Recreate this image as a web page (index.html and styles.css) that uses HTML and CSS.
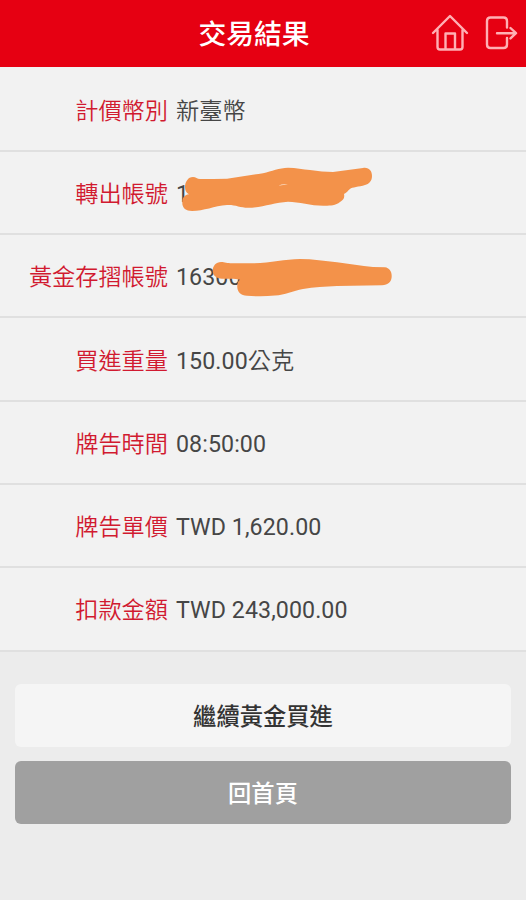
FILE: index.html
```html
<!DOCTYPE html>
<html lang="zh-Hant">
<head>
<meta charset="utf-8">
<meta name="viewport" content="width=device-width, initial-scale=1">
<title>交易結果</title>
<link rel="stylesheet" href="styles.css">
</head>
<body>
<header class="topbar">
  <h1 class="title">交易結果</h1>
  <nav class="actions">
    <svg class="icon" width="38" height="38" viewBox="0 0 38 38">
      <path d="M2 19 19 2 36 19 M6.500 16V33Q6.500 35.500 9 35.500H29Q31.500 35.500 31.500 33V16 M14.500 35V19.500H24V35"/>
    </svg>
    <svg class="icon" width="33" height="34" viewBox="0 0 33 34">
      <path d="M22 11.500V5Q22 1.500 18.500 1.500H5.500Q2 1.500 2 5V28.500Q2 32 5.500 32H18.500Q22 32 22 28.500V22 M12 17.200H30 M25.500 12 31 17.200 25.500 22.400"/>
    </svg>
  </nav>
</header>
<main>
  <dl class="details">
    <div class="row"><dt>計價幣別</dt><dd><span class="han">新臺幣</span></dd></div>
    <div class="row"><dt>轉出帳號</dt><dd>1
      <svg class="mask mask-out" width="200" height="46" viewBox="0 0 200 46">
        <path d="M17 10C20 10 21 12 24 12C33 12 42 12 51 11.700C63 10 75 8 87 6.300C96 4 103 1 112 .7C120 .7 127 2.500 134 3C142 4 150 5 157 5L187 1C193 0 196 4 196 9C196 14 193 17 189 18C183 20 176 20 174 22C172 23 172 25 168 27C169 31 167 33 164 35C159 39 153 38.700 147 38.700C135 38.700 123 34.700 112 34.700C98 35.500 86 40.700 72 40.700C64 40.700 59 37.500 51 38C38 39 28 44 16 44C10 44 6.300 41 6.300 36C6.300 31 8 28 13 27.300C10 26 9 23 9 20C9 15 12 10 17 10Z"/>
        <path class="gap" d="M102.500 18.700Q107 16.500 112 17.700Q107 17.800 102.500 18.700Z"/>
      </svg></dd></div>
    <div class="row"><dt>黃金存摺帳號</dt><dd>16300
      <svg class="mask mask-gold" width="220" height="40" viewBox="0 0 220 40">
        <path d="M45 4C49 4 51 5.300 56 5.300H78C95 5 109 1 124 1C137 1 149 3 161 4.300C173 6 185 8 197 9L209 9.300C213 10 215.700 13 215.700 18C215.700 24 212 27 206 27.300L161 28C149 28.500 138 29 127 31C117 33 109 37 99 37.500C90 38.500 80 38.500 71 37.700C65 37.700 61.500 34 61.300 29.300C61 26 62 23 64 21.700C58 20 52 21 46 20.700C40 20.700 36.700 17 36.700 12.700C36.700 8 40 4 45 4Z"/>
      </svg></dd></div>
    <div class="row"><dt>買進重量</dt><dd>150.00<span class="han">公克</span></dd></div>
    <div class="row"><dt>牌告時間</dt><dd>08:50:00</dd></div>
    <div class="row"><dt>牌告單價</dt><dd>TWD 1,620.00</dd></div>
    <div class="row"><dt>扣款金額</dt><dd>TWD 243,000.00</dd></div>
  </dl>
  <div class="buttons">
    <button class="btn btn-light" type="button">繼續黃金買進</button>
    <button class="btn btn-dark" type="button">回首頁</button>
  </div>
</main>
</body>
</html>
```
FILE: styles.css
```css
* {
  box-sizing: border-box;
}

body {
  margin: 0;
  min-height: 100vh;
  background: #ececec;
  font-family: Roboto, "Noto Sans CJK TC", sans-serif;
  color: #464646;
}

.topbar {
  display: grid;
  grid-template-columns: 1fr auto 1fr;
  align-items: center;
  height: 67px;
  padding: 0 8px 0 0;
  background: #e60012;
}

.title {
  grid-column: 2;
  margin: 3px 0 0 -10px;
  font-size: 27.8px;
  line-height: 40px;
  font-weight: 500;
  color: #fff;
}

.actions {
  display: flex;
  justify-content: flex-end;
  align-items: center;
  gap: 16px;
}

.icon {
  display: block;
  margin-top: -1px;
  fill: none;
  stroke: #ffb0b4;
  stroke-width: 2.4;
  stroke-linecap: round;
  stroke-linejoin: round;
}

.details {
  margin: 0;
  padding-top: 1.5px;
  background: #f2f2f2;
}

.row {
  display: flex;
  align-items: center;
  height: 83.3px;
  padding-top: 3px;
  border-bottom: 2px solid #e0e0e0;
  font-size: 23.2px;
  line-height: 34px;
}

.row dt {
  width: 168px;
  text-align: right;
  color: #d11a30;
  font-weight: 350;
}

.row dd {
  position: relative;
  margin: 0 0 0 8px;
  font-weight: 400;
  letter-spacing: 0.08px;
  white-space: nowrap;
}

.han {
  font-weight: 350;
}

.mask {
  position: absolute;
  left: 0;
  fill: #f3924a;
}

.mask-out {
  top: -10px;
}

.mask-gold {
  top: -2px;
}

.gap {
  fill: #fbe3cf;
}

.buttons {
  display: flex;
  flex-direction: column;
  gap: 14px;
  padding: 32px 15px 0;
}

.btn {
  height: 63px;
  border: 0;
  border-radius: 6px;
  padding: 0;
  font-family: inherit;
  font-size: 23.3px;
  font-weight: 500;
}

.btn-light {
  background: #f5f5f5;
  color: #333;
}

.btn-dark {
  background: #a0a0a0;
  color: #fff;
}
```
